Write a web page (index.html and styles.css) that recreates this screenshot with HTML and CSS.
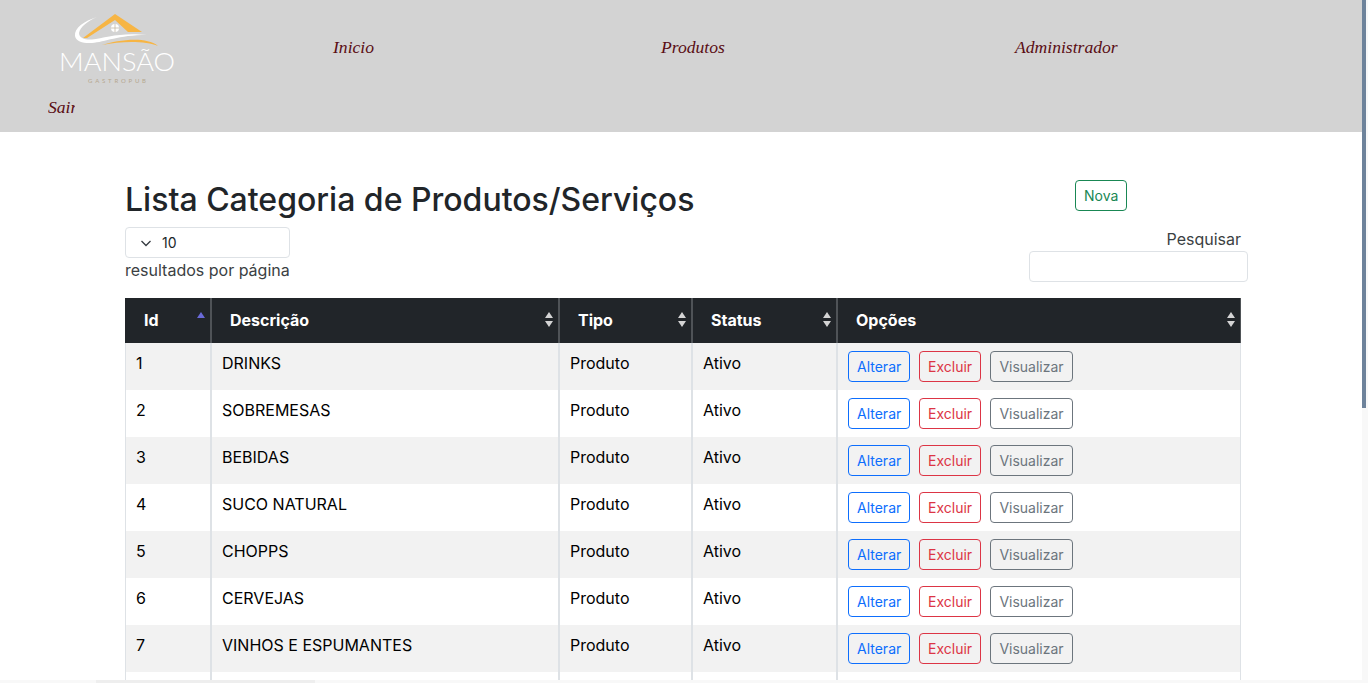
FILE: index.html
```html
<!DOCTYPE html>
<html lang="pt-BR">
<head>
<meta charset="utf-8">
<title>Lista Categoria de Produtos/Serviços</title>
<link rel="stylesheet" href="styles.css">
</head>
<body>
<header class="site-header">
  <nav class="site-nav">
    <a class="brand" href="#">
      <svg class="logo" viewBox="50 10 135 80" width="135" height="80" aria-label="Mansão Gastropub">
        <path d="M97 17C84 21 74 28 75 36C76 42 84 43.5 92 43C105 42 118 35 147 35C120 32 105 38 92 39.5C85 40 79 38 79 33C80 27 88 21 97 17Z" fill="#fff"/>
        <path d="M83 38L115 14L142 32L128 32L115 20L87 38Z" fill="#f7b544"/>
        <path d="M102 45C118 40 146 36 158 46C146 41 122 41 102 45Z" fill="#f7b544"/>
        <circle cx="115" cy="28" r="4" fill="#fff"/>
        <path d="M115 24V32M111 28H119" stroke="#c4b9a6" stroke-width=".8"/>
        <text x="59" y="71" class="logo-name" textLength="116" lengthAdjust="spacingAndGlyphs">MANSÃO</text>
        <text x="88" y="83" class="logo-sub" textLength="58" lengthAdjust="spacing">GASTROPUB</text>
      </svg>
    </a>
    <a class="nav-link" href="#">Inicio</a>
    <a class="nav-link" href="#">Produtos</a>
    <a class="nav-link" href="#">Administrador</a>
    <a class="nav-link nav-exit" href="#">Sair</a>
  </nav>
</header>

<main class="content">
  <section class="toolbar">
    <div class="toolbar-left">
      <h1 class="page-title">Lista Categoria de Produtos/Serviços</h1>
      <div class="per-page">
        <div class="select-wrap">
          <svg class="select-chevron" viewBox="0 0 12 12" width="12" height="12"><path d="M1.5 4L6 8.5L10.5 4" fill="none" stroke="#343a40" stroke-width="1.3"/></svg>
          <select class="select-box"><option>10</option></select>
        </div>
        <span class="per-page-label">resultados por página</span>
      </div>
    </div>
    <div class="toolbar-right">
      <a class="btn btn-green" href="#">Nova</a>
      <label class="search-label" for="q">Pesquisar</label>
      <input class="search-input" id="q" type="text">
    </div>
  </section>

  <table class="data-table">
    <colgroup>
      <col class="col-id"><col class="col-desc"><col class="col-type"><col class="col-status"><col class="col-options">
    </colgroup>
    <thead>
      <tr>
        <th class="sorted">Id</th>
        <th class="sortable">Descrição</th>
        <th class="sortable">Tipo</th>
        <th class="sortable">Status</th>
        <th class="sortable">Opções</th>
      </tr>
    </thead>
    <tbody>
      <tr><td>1</td><td>DRINKS</td><td>Produto</td><td>Ativo</td><td><div class="actions"><a class="btn btn-blue" href="#">Alterar</a><a class="btn btn-red" href="#">Excluir</a><a class="btn btn-gray" href="#">Visualizar</a></div></td></tr>
      <tr><td>2</td><td>SOBREMESAS</td><td>Produto</td><td>Ativo</td><td><div class="actions"><a class="btn btn-blue" href="#">Alterar</a><a class="btn btn-red" href="#">Excluir</a><a class="btn btn-gray" href="#">Visualizar</a></div></td></tr>
      <tr><td>3</td><td>BEBIDAS</td><td>Produto</td><td>Ativo</td><td><div class="actions"><a class="btn btn-blue" href="#">Alterar</a><a class="btn btn-red" href="#">Excluir</a><a class="btn btn-gray" href="#">Visualizar</a></div></td></tr>
      <tr><td>4</td><td>SUCO NATURAL</td><td>Produto</td><td>Ativo</td><td><div class="actions"><a class="btn btn-blue" href="#">Alterar</a><a class="btn btn-red" href="#">Excluir</a><a class="btn btn-gray" href="#">Visualizar</a></div></td></tr>
      <tr><td>5</td><td>CHOPPS</td><td>Produto</td><td>Ativo</td><td><div class="actions"><a class="btn btn-blue" href="#">Alterar</a><a class="btn btn-red" href="#">Excluir</a><a class="btn btn-gray" href="#">Visualizar</a></div></td></tr>
      <tr><td>6</td><td>CERVEJAS</td><td>Produto</td><td>Ativo</td><td><div class="actions"><a class="btn btn-blue" href="#">Alterar</a><a class="btn btn-red" href="#">Excluir</a><a class="btn btn-gray" href="#">Visualizar</a></div></td></tr>
      <tr><td>7</td><td>VINHOS E ESPUMANTES</td><td>Produto</td><td>Ativo</td><td><div class="actions"><a class="btn btn-blue" href="#">Alterar</a><a class="btn btn-red" href="#">Excluir</a><a class="btn btn-gray" href="#">Visualizar</a></div></td></tr>
      <tr class="row-cut"><td></td><td></td><td></td><td></td><td></td></tr>
    </tbody>
  </table>
</main>

<div class="scroll-y"><div class="scroll-y-thumb"></div></div>
<div class="scroll-x"><div class="scroll-x-thumb"></div></div>
</body>
</html>
```

FILE: styles.css
```css
* { box-sizing: border-box; }

html, body {
  margin: 0;
  height: 100%;
  overflow: hidden;
}

body {
  background: #fff;
  color: #212529;
  font-family: Inter, "Liberation Sans", sans-serif;
  font-size: 16px;
  line-height: 1.5;
}

/* header */
.site-header {
  height: 132px;
  background: #d3d3d3;
}

.site-nav {
  display: grid;
  grid-template-columns: 333px 328px 354px 1fr;
  grid-template-rows: 94px 26px;
  align-items: center;
}

.brand {
  display: block;
  padding: 0 0 0 50px;
  height: 94px;
}

.logo {
  display: block;
  margin-top: 10px;
}

.logo-name {
  font-family: Lato, "Noto Sans", sans-serif;
  font-weight: 300;
  font-size: 25px;
  fill: #fff;
}

.logo-sub {
  font-family: Lato, "Noto Sans", sans-serif;
  font-size: 6px;
  fill: #b5a78f;
}

.nav-link {
  font-family: "Liberation Serif", serif;
  font-style: italic;
  font-size: 17.6px;
  color: #5a0d14;
  text-decoration: none;
}

.nav-exit {
  grid-column: 1;
  grid-row: 2;
  display: block;
  width: 27px;
  margin-left: 48px;
  overflow: hidden;
  white-space: nowrap;
}

/* toolbar */
.content {
  padding: 48px 0 0 125px;
}

.toolbar {
  display: flex;
  justify-content: space-between;
  width: 1123px;
  margin-bottom: 16px;
}

.page-title {
  margin: 0 0 8px;
  font-size: 32px;
  font-weight: 500;
  line-height: 39px;
}

.per-page {
  display: flex;
  flex-direction: column;
  width: 165px;
}

.select-wrap {
  position: relative;
  height: 31px;
}

.select-chevron {
  position: absolute;
  left: 15px;
  top: 10px;
}

.select-box {
  display: block;
  width: 100%;
  height: 31px;
  padding: 0 0 0 36px;
  appearance: none;
  background: #fff;
  border: 1px solid #dee2e6;
  border-radius: 4px;
  color: #212529;
  font-family: Inter, "Liberation Sans", sans-serif;
  font-size: 14px;
}

.per-page-label {
  color: #3b3f43;
  white-space: nowrap;
}

.toolbar-right {
  display: flex;
  flex-direction: column;
  width: 219px;
}

.search-label {
  margin: 16px 7px 0 0;
  color: #3b3f43;
  text-align: right;
}

.search-input {
  display: block;
  width: 100%;
  height: 31px;
  background: #fff;
  border: 1px solid #dee2e6;
  border-radius: 4px;
}

/* buttons */
.btn {
  display: inline-block;
  height: 31px;
  padding: 4px 8px;
  background: transparent;
  border: 1px solid currentColor;
  border-radius: 4px;
  font-size: 14px;
  line-height: 21px;
  text-align: center;
  text-decoration: none;
}

.btn-green {
  align-self: flex-start;
  margin-left: 46px;
  color: #198754;
}

.btn-blue { color: #0d6efd; width: 62px; }
.btn-red { color: #dc3545; width: 62px; }
.btn-gray { color: #6c757d; width: 83px; }

/* table */
.data-table {
  width: 1116px;
  table-layout: fixed;
  border-collapse: separate;
  border-spacing: 0;
  border-left: 1px solid #dee2e6;
  color: #000;
}

.col-id { width: 86px; }
.col-desc { width: 348px; }
.col-type { width: 133px; }
.col-status { width: 145px; }
.col-options { width: 403px; }

.data-table th {
  position: relative;
  height: 45px;
  padding: 0 18px 2px;
  background: #212529;
  border-right: 2px solid #4f5357;
  color: #fff;
  font-weight: 700;
  text-align: left;
}

.data-table th:last-child,
.data-table td:last-child {
  border-right-width: 1px;
}

.data-table th:first-child {
  box-shadow: -1px 0 0 #212529;
}

.data-table td {
  height: 47px;
  padding: 8px 10px;
  border-right: 2px solid #dee2e6;
  vertical-align: top;
}

.data-table tbody tr:nth-child(odd) td {
  background: #f2f2f2;
}

.data-table tbody tr.row-cut td {
  background: #fff;
}

.sortable::before,
.sortable::after,
.sorted::before {
  content: "";
  position: absolute;
  right: 5px;
  border-left: 4.5px solid transparent;
  border-right: 4.5px solid transparent;
}

.sortable::before {
  top: 14px;
  border-bottom: 6px solid #d4d4d4;
}

.sortable::after {
  top: 23px;
  border-top: 6px solid #d4d4d4;
}

.sorted::before {
  top: 14px;
  border-bottom: 6px solid #6a6ad8;
}

.actions {
  display: flex;
  gap: 9px;
}

/* scrollbars */
.scroll-y {
  position: fixed;
  top: 0;
  right: 0;
  bottom: 0;
  width: 6px;
  background: #f8f8f8;
}

.scroll-y-thumb {
  width: 4px;
  height: 408px;
  background: #6e839b;
}

.scroll-x {
  position: fixed;
  left: 0;
  right: 0;
  bottom: 0;
  height: 3px;
  padding-left: 96px;
  background: #f8f8f8;
}

.scroll-x-thumb {
  width: 219px;
  height: 3px;
  background: #eeeeee;
}
```
